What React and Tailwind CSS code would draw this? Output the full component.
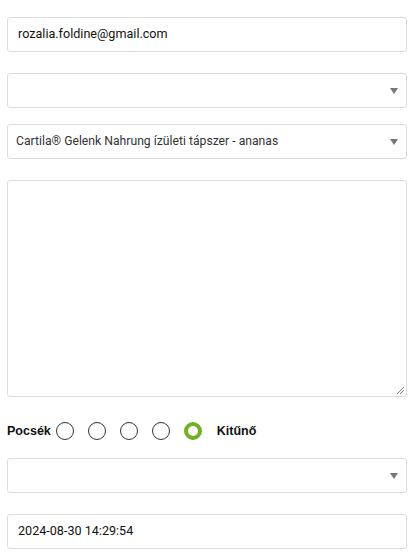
import React from "react";

const Arrow = () => (
  <svg width="8" height="6" viewBox="0 0 8 6" className="shrink-0">
    <path d="M0 0 L8 0 L4 6 Z" fill="#777" />
  </svg>
);

export default function App() {
  return (
    <div className="w-[415px] h-[560px] bg-white pl-[7px] pt-[17px]" style={{ fontFamily: "Roboto, 'Liberation Sans', sans-serif" }}>
      <div className="w-[400px] h-[35px] border border-[#dcdcdc] rounded-[3px] flex items-center px-[10px] text-[12.6px] text-[#111]">
        rozalia.foldine@gmail.com
      </div>
      <div className="mt-[21px] w-[400px] h-[35px] border border-[#dcdcdc] rounded-[3px] flex items-center justify-end pr-[8px]">
        <Arrow />
      </div>
      <div className="mt-[16px] w-[400px] h-[35px] border border-[#dcdcdc] rounded-[3px] flex items-center justify-between pl-[8px] pr-[8px] text-[12.2px] text-[#333]">
        <span>Cartila® Gelenk Nahrung ízületi tápszer - ananas</span>
        <Arrow />
      </div>
      <div className="mt-[21px] w-[400px] h-[217px] border border-[#dcdcdc] rounded-[3px] relative">
        <svg width="10" height="10" viewBox="0 0 10 10" className="absolute right-[1px] bottom-[1px]">
          <path d="M9 2 L2 9 M9 5 L5 9" stroke="#888" strokeWidth="1" />
        </svg>
      </div>
      <div className="mt-[23px] h-[22px] flex items-center text-[12.5px] font-bold text-[#111]" style={{ fontFamily: "'Liberation Sans', Arial, sans-serif" }}>
        <span className="mr-[2px]">Pocsék</span>
        <span className="w-[18px] h-[18px] rounded-full border border-[#333] ml-[3px]" />
        <span className="w-[18px] h-[18px] rounded-full border border-[#333] ml-[14px]" />
        <span className="w-[18px] h-[18px] rounded-full border border-[#333] ml-[14px]" />
        <span className="w-[18px] h-[18px] rounded-full border border-[#333] ml-[14px]" />
        <span className="w-[18px] h-[18px] rounded-full border-[4px] border-[#72b127] ml-[14px]" />
        <span className="ml-[15px]">Kitűnő</span>
      </div>
      <div className="mt-[16px] w-[400px] h-[35px] border border-[#dcdcdc] rounded-[3px] flex items-center justify-end pr-[8px]">
        <Arrow />
      </div>
      <div className="mt-[21px] w-[400px] h-[35px] border border-[#dcdcdc] rounded-[3px] flex items-center px-[10px] text-[12.6px] text-[#111]">
        2024-08-30 14:29:54
      </div>
    </div>
  );
}
